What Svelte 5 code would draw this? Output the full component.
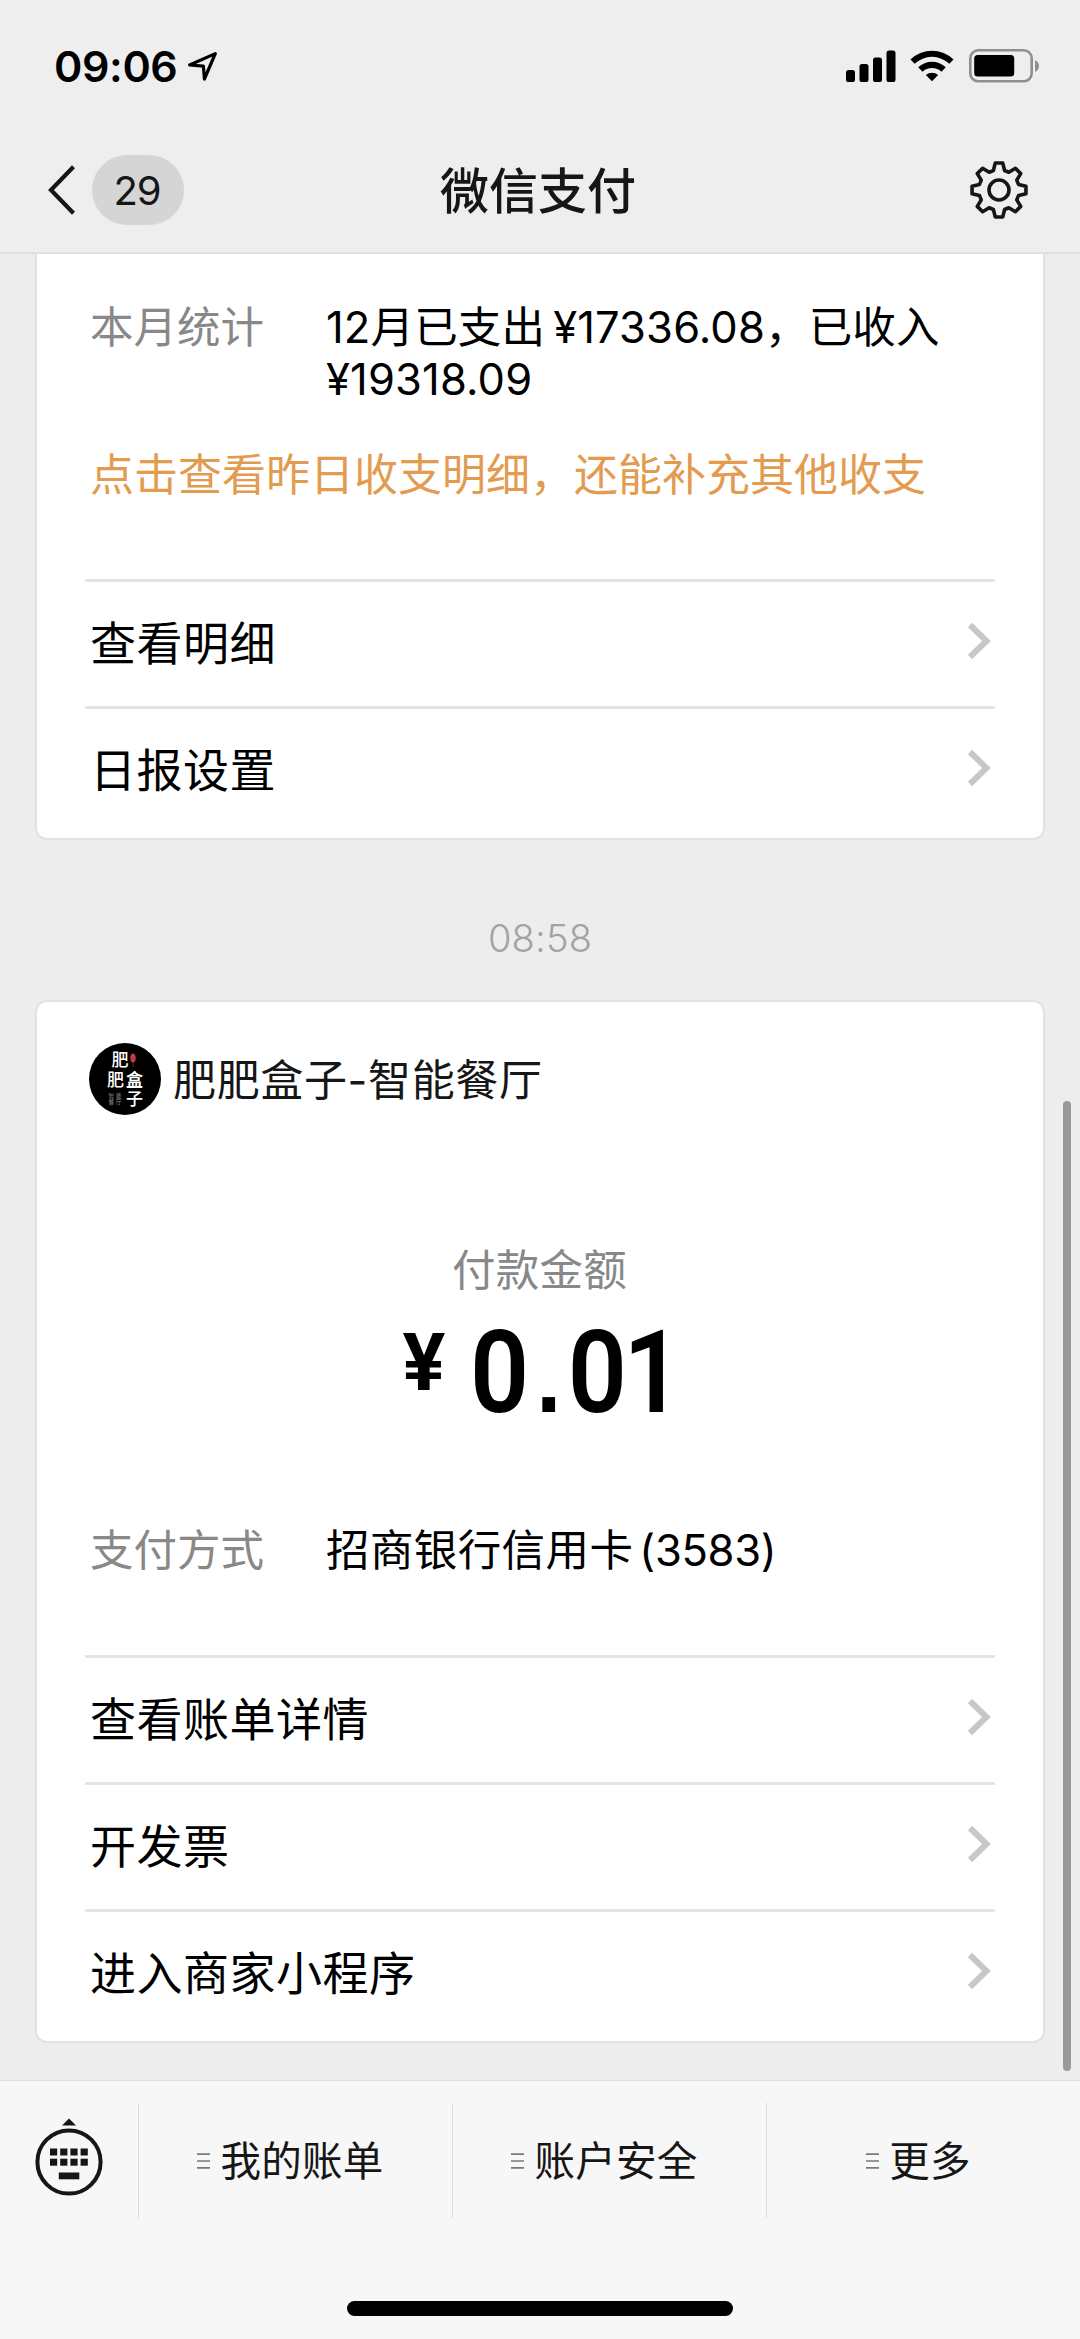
<script>
  const dailyLinks = ['查看明细', '日报设置'];
  const paymentLinks = ['查看账单详情', '开发票', '进入商家小程序'];
  const menus = ['我的账单', '账户安全', '更多'];

  // eight teeth, each one drawn as base, tip, tip, base
  const gearPath = 'M' + Array.from({ length: 8 }, (_, i) =>
    [[-16, 20.3], [-8, 27.2], [8, 27.2], [16, 20.3]].map(([offset, r]) => {
      const a = ((i * 45 + offset) * Math.PI) / 180;
      return `${(30 + r * Math.sin(a)).toFixed(2)} ${(30 - r * Math.cos(a)).toFixed(2)}`;
    }).join('L')
  ).join('L') + 'Z';
</script>

{#snippet linkRow(label)}
  <a class="link-row" href="#top">
    <span>{label}</span>
    <svg width="24" height="38" viewBox="0 0 24 38">
      <path d="M3 3 L19.5 19 L3 35" fill="none" stroke="#c7c7c9" stroke-width="6" />
    </svg>
  </a>
{/snippet}

<div class="screen">
  <header>
    <div class="status">
      <span class="clock">09:06</span>
      <svg class="location" width="32" height="32" viewBox="0 0 32 32">
        <path d="M2.6 15 L28.3 3.6 L17.4 29 L16.4 16.2 Z" fill="none" stroke="#000" stroke-width="3.2" stroke-linejoin="round" />
      </svg>
      <div class="indicators">
        <svg width="50" height="32" viewBox="0 0 50 32">
          <rect x="0" y="20" width="9" height="12" rx="2.6" />
          <rect x="13.5" y="14" width="9" height="18" rx="2.6" />
          <rect x="27" y="7.5" width="9" height="24.5" rx="2.6" />
          <rect x="40.5" y="0.5" width="9" height="31.5" rx="2.6" />
        </svg>
        <svg class="wifi" width="44" height="32" viewBox="0 0 44 32">
          <path d="M0.5 9.5 A31 31 0 0 1 43.5 9.5 L39.3 13.8 A25 25 0 0 0 4.7 13.8 Z" />
          <path d="M8.2 17.3 A20 20 0 0 1 35.8 17.3 L31.5 21.7 A14 14 0 0 0 12.5 21.7 Z" />
          <path d="M15.8 25 A9.5 9.5 0 0 1 28.2 25 L22 31.3 Z" />
        </svg>
        <svg width="72" height="34" viewBox="0 0 72 34">
          <rect x="1.3" y="1.3" width="61.4" height="31" rx="8" fill="none" stroke="#8f8f8f" stroke-width="2.6" />
          <rect x="5.2" y="6" width="40" height="21.5" rx="3.5" />
          <path d="M66 11 Q70 13 70 17 Q70 21 66 23 Z" fill="#8f8f8f" />
        </svg>
      </div>
    </div>

    <nav>
      <div class="back">
        <svg width="28" height="50" viewBox="0 0 28 50">
          <path d="M25.5 1.8 L3 25 L25.5 48.2" fill="none" stroke="#161616" stroke-width="4.2" />
        </svg>
        <span class="unread">29</span>
      </div>
      <h1>微信支付</h1>
      <svg class="gear" width="60" height="60" viewBox="0 0 60 60" fill="none" stroke="#161616" stroke-width="3.6" stroke-linejoin="round">
        <path d={gearPath} />
        <circle cx="30" cy="30" r="10" />
      </svg>
    </nav>
  </header>

  <main>
    <section class="card daily">
      <div class="field">
        <span class="label">本月统计</span>
        <span class="value">12月已支出<span class="yen">¥</span>17336.08，已收入<br />¥19318.09</span>
      </div>
      <p class="hint">点击查看昨日收支明细，还能补充其他收支</p>
      <div class="links">
        {#each dailyLinks as label}
          {@render linkRow(label)}
        {/each}
      </div>
    </section>

    <time>08:58</time>

    <section class="card payment">
      <div class="merchant">
        <svg width="72" height="72" viewBox="0 0 72 72">
          <circle cx="36" cy="36" r="36" />
          <g fill="#fff" font-size="17" font-weight="500">
            <text x="22.5" y="22.5">肥</text>
            <text x="18" y="43">肥</text>
            <text x="37" y="43" font-weight="700">盒</text>
            <text x="37" y="62">子</text>
          </g>
          <ellipse cx="44" cy="15" rx="2.7" ry="4.5" fill="#c9393b" />
          <path d="M44 19 V24" stroke="#7d2a2a" stroke-width="0.8" />
          <g fill="#999" font-size="5.5" letter-spacing="2">
            <text x="19.5" y="55">智能</text>
            <text x="19.5" y="61">餐厅</text>
          </g>
        </svg>
        <span>肥肥盒子-智能餐厅</span>
      </div>

      <div class="amount">
        <span class="caption">付款金额</span>
        <div class="sum">
          <span class="currency">¥</span>
          <span class="digits">0<span class="point">.</span>0<span class="last">1</span></span>
        </div>
      </div>

      <div class="field">
        <span class="label">支付方式</span>
        <span class="value bank">招商银行信用卡<span class="card-no">(3583)</span></span>
      </div>

      <div class="links">
        {#each paymentLinks as label}
          {@render linkRow(label)}
        {/each}
      </div>
    </section>

    <div class="scrollbar"></div>
  </main>

  <footer>
    <div class="tabs">
      <div class="keyboard">
        <svg width="70" height="80" viewBox="0 0 70 80" fill="#161616">
          <path d="M28 8.5 L35 1.5 L42 8.5 Z" />
          <circle cx="35" cy="45" r="31.6" fill="none" stroke="#161616" stroke-width="4" />
          {#each [16, 26.2, 36.4, 46.6] as x}
            <rect {x} y="31.5" width="7.2" height="7" />
            <rect {x} y="41.7" width="7.2" height="7" />
          {/each}
          <rect x="24.8" y="55.5" width="20.5" height="6.8" />
        </svg>
      </div>
      {#each menus as menu}
        <div class="tab">
          <svg width="13" height="16" viewBox="0 0 13 16">
            <path d="M0 1.2 H13 M0 8 H13 M0 14.8 H13" stroke="#7a7a7a" stroke-width="1.7" />
          </svg>
          <span>{menu}</span>
        </div>
      {/each}
    </div>
    <div class="home"></div>
  </footer>
</div>

<style>
  :global(body) {
    margin: 0;
  }

  .screen {
    display: flex;
    flex-direction: column;
    width: 1080px;
    height: 2339px;
    overflow: hidden;
    background: #ededed;
    color: #000;
    font-family: Inter, 'Noto Sans CJK SC', sans-serif;
  }

  svg {
    display: block;
    flex: none;
  }

  header {
    height: 252px;
    flex: none;
    border-bottom: 2px solid #e0e0e0;
    background: #eee;
  }

  .status {
    display: flex;
    align-items: center;
    height: 132px;
    padding: 0 39px 0 54px;
  }

  .clock {
    font-size: 43px;
    font-weight: 600;
    line-height: 50px;
    letter-spacing: -0.4px;
  }

  .location {
    margin-left: 10px;
  }

  .indicators {
    display: flex;
    align-items: center;
    margin-left: auto;
  }

  .wifi {
    margin: 0 15px 0 14px;
  }

  nav {
    display: grid;
    grid-template-columns: 1fr auto 1fr;
    align-items: center;
    height: 116px;
    padding: 0 51px 0 48px;
  }

  .back {
    display: flex;
    align-items: center;
  }

  .unread {
    width: 90px;
    height: 70px;
    margin-left: 16px;
    padding-right: 2px;
    border-radius: 35px;
    background: #d5d5d5;
    color: #161616;
    font-size: 40px;
    line-height: 72px;
    text-align: center;
    letter-spacing: -1px;
  }

  h1 {
    margin: 4px 1px 0 0;
    color: #161616;
    font-size: 49px;
    font-weight: 500;
    line-height: 60px;
  }

  .gear {
    justify-self: end;
  }

  main {
    position: relative;
    flex: 1;
    min-height: 0;
    padding: 0 35px;
    overflow: hidden;
  }

  .card {
    box-sizing: border-box;
    border: 2px solid #e2e2e2;
    border-radius: 12px;
    background: #fff;
  }

  .daily {
    height: 586px;
    padding-top: 47px;
    border-top: 0;
    border-radius: 0 0 12px 12px;
  }

  .field {
    display: flex;
    padding-left: 53px;
    font-size: 43.5px;
    line-height: 52px;
  }

  .label {
    width: 236px;
    color: #888;
  }

  .value {
    letter-spacing: 0.15px;
  }

  .bank {
    letter-spacing: 0.4px;
  }

  .yen {
    margin-left: 8px;
  }

  .card-no {
    margin-left: 6px;
    letter-spacing: -0.3px;
  }

  .hint {
    margin: 42px 0 0 53px;
    color: #e39b50;
    font-size: 44px;
    line-height: 56px;
  }

  .links {
    margin: 0 48px 0 48px;
  }

  .daily .links {
    margin-top: 76px;
  }

  .link-row {
    display: flex;
    align-items: center;
    justify-content: space-between;
    height: 124px;
    padding: 0 4px 0 5px;
    border-top: 3px solid #e4e4e4;
    color: #000;
    font-size: 46px;
    line-height: 56px;
    letter-spacing: 0.5px;
    text-decoration: none;
  }

  .link-row span {
    margin-top: -2px;
  }

  .link-row svg {
    margin-top: -6px;
  }

  time {
    display: block;
    height: 160px;
    color: #a3a3a3;
    font-size: 38px;
    font-weight: 300;
    line-height: 196px;
    text-align: center;
    letter-spacing: 0.2px;
  }

  .payment {
    height: 1043px;
    padding-top: 41px;
  }

  .merchant {
    display: flex;
    align-items: center;
    gap: 12px;
    padding-left: 52px;
    color: #161616;
    font-size: 43px;
    letter-spacing: 0.65px;
  }

  .merchant svg {
    letter-spacing: 0;
  }

  .merchant span {
    margin-top: -4px;
  }

  .amount {
    display: flex;
    flex-direction: column;
    align-items: center;
    height: 409px;
    padding-top: 127px;
    box-sizing: border-box;
  }

  .caption {
    margin-right: 1px;
    color: #888;
    font-size: 43.5px;
    line-height: 56px;
    letter-spacing: 0.3px;
  }

  .sum {
    display: flex;
    align-items: flex-start;
    margin-top: 6px;
    font-family: Roboto, sans-serif;
    font-size: 115px;
    font-weight: 600;
    line-height: 138px;
  }

  .currency {
    margin-right: 25px;
    font-size: 80px;
    font-weight: 700;
    line-height: 118px;
  }

  /* narrow numerals, close to a DIN face */
  .digits {
    width: 207px;
    white-space: nowrap;
    transform: scaleX(0.9);
    transform-origin: left;
  }

  /* square decimal point */
  .point {
    margin: 0 7px 0 8px;
    font-family: 'Liberation Sans', sans-serif;
    font-size: 100px;
    font-weight: 700;
    line-height: 1;
  }

  .last {
    margin-left: -4px;
  }

  .payment .links {
    margin-top: 79px;
  }

  .scrollbar {
    position: absolute;
    top: 847px;
    right: 9px;
    width: 8px;
    height: 970px;
    border-radius: 4px;
    background: #999;
  }

  footer {
    height: 258px;
    flex: none;
    border-top: 1px solid #dedede;
    background: #f7f7f7;
  }

  .tabs {
    display: flex;
    height: 115px;
    padding-top: 22px;
  }

  .keyboard {
    display: flex;
    width: 138px;
    padding: 14px 0 0 34px;
    box-sizing: border-box;
  }

  .tab {
    display: flex;
    flex: 1;
    align-items: center;
    justify-content: center;
    gap: 10px;
    padding-right: 10px;
    border-left: 1px solid #dcdcdc;
    color: #161616;
    font-size: 40.5px;
    line-height: 50px;
    letter-spacing: 0.3px;
  }

  .tab span {
    margin-top: 2px;
  }

  .home {
    width: 386px;
    height: 15px;
    margin: 83px auto 0;
    border-radius: 8px;
    background: #000;
  }
</style>
